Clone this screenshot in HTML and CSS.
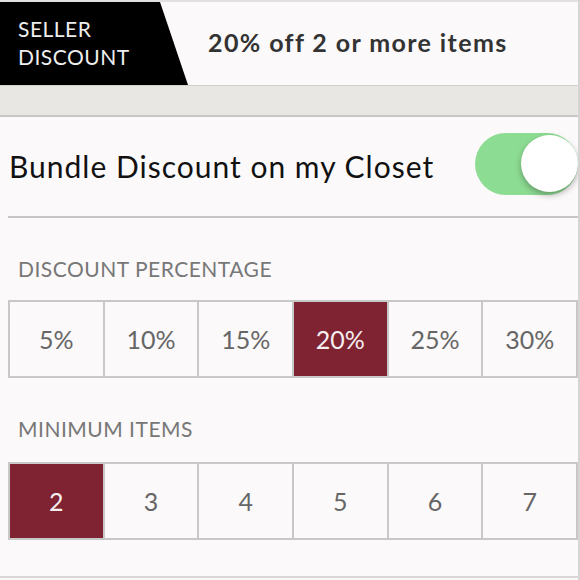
FILE: index.html
```html
<!DOCTYPE html>
<html>
<head>
    <title>Seller Discount</title>
    <meta charset="UTF-8">
    <link rel="stylesheet" href="styles.css">
</head>
<body>
    <div id="pagina">
        <div class="banner">
            <div class="etiqueta">SELLER<br>DISCOUNT</div>
            <div class="oferta">20% off 2 or more items</div>
        </div>
        <div class="franja"></div>

        <div class="filaBundle">
            <span class="tituloBundle">Bundle Discount on my Closet</span>
            <span class="interruptor"><span class="bola"></span></span>
        </div>
        <div class="separador"></div>

        <div class="rotulo">DISCOUNT PERCENTAGE</div>
        <div class="opciones">
            <span>5%</span>
            <span>10%</span>
            <span>15%</span>
            <span class="elegida">20%</span>
            <span>25%</span>
            <span>30%</span>
        </div>

        <div class="rotulo segundo">MINIMUM ITEMS</div>
        <div class="opciones">
            <span class="elegida">2</span>
            <span>3</span>
            <span>4</span>
            <span>5</span>
            <span>6</span>
            <span>7</span>
        </div>
        <div class="pie"></div>
    </div>
</body>
</html>
```

FILE: styles.css
```css
html, body{
    margin: 0;
    padding: 0;
    background-color: #fbf9f9;
}
#pagina{
    font-family: Lato, "Liberation Sans", sans-serif;
    width: 578px;
    height: 580px;
    overflow: hidden;
    border-right: 2px solid #d6d4d4;
    background-color: #fbf9f9;
}

.banner{
    display: flex;
    align-items: center;
    height: 83px;
    border-top: 2px solid #e2e0e0;
}
.etiqueta{
    background-color: #000;
    color: #eeeeee;
    width: 188px;
    height: 83px;
    box-sizing: border-box;
    padding: 13px 0 0 18px;
    font-size: 21px;
    line-height: 28px;
    letter-spacing: 0.5px;
    clip-path: polygon(0 0, 160px 0, 188px 100%, 0 100%);
}
.oferta{
    margin: -4px 0 0 20px;
    font-size: 25px;
    font-weight: 700;
    letter-spacing: 1.4px;
    color: #333333;
}

.franja{
    height: 29px;
    background-color: #e9e7e3;
    border-top: 1px solid #d2d0cd;
    border-bottom: 2px solid #c9c7c4;
}

.filaBundle{
    display: flex;
    align-items: center;
    justify-content: space-between;
    height: 99px;
    padding-left: 9px;
}
.tituloBundle{
    font-size: 30px;
    letter-spacing: 1px;
    color: #111111;
    margin-top: -1px;
}
.interruptor{
    position: relative;
    width: 103px;
    height: 62px;
    margin-top: -6px;
    border-radius: 31px;
    background-color: #8ddc93;
}
.interruptor .bola{
    position: absolute;
    right: 0;
    top: 2px;
    width: 57px;
    height: 57px;
    border-radius: 50%;
    background-color: #ffffff;
    box-shadow: 0 3px 6px rgba(0, 0, 0, 0.3);
}

.separador{
    height: 2px;
    margin-left: 8px;
    background-color: #c6c6c6;
}

.rotulo{
    margin: 39px 0 0 18px;
    font-size: 21px;
    line-height: 24px;
    letter-spacing: 0.5px;
    color: #777777;
}

.opciones{
    display: grid;
    grid-template-columns: repeat(6, 1fr);
    gap: 2px;
    margin: 19px 0 0 8px;
    padding: 2px;
    height: 74px;
    background-color: #c8c8c8;
}
.rotulo.segundo + .opciones{
    margin-top: 21px;
}
.opciones span{
    display: flex;
    align-items: center;
    justify-content: center;
    background-color: #fbf9f9;
    color: #666666;
    font-size: 25px;
}
.opciones span.elegida{
    background-color: #7f2231;
    color: #f5eeee;
}

.pie{
    height: 2px;
    margin-top: 36px;
    background-color: #d8d6d6;
}
```
